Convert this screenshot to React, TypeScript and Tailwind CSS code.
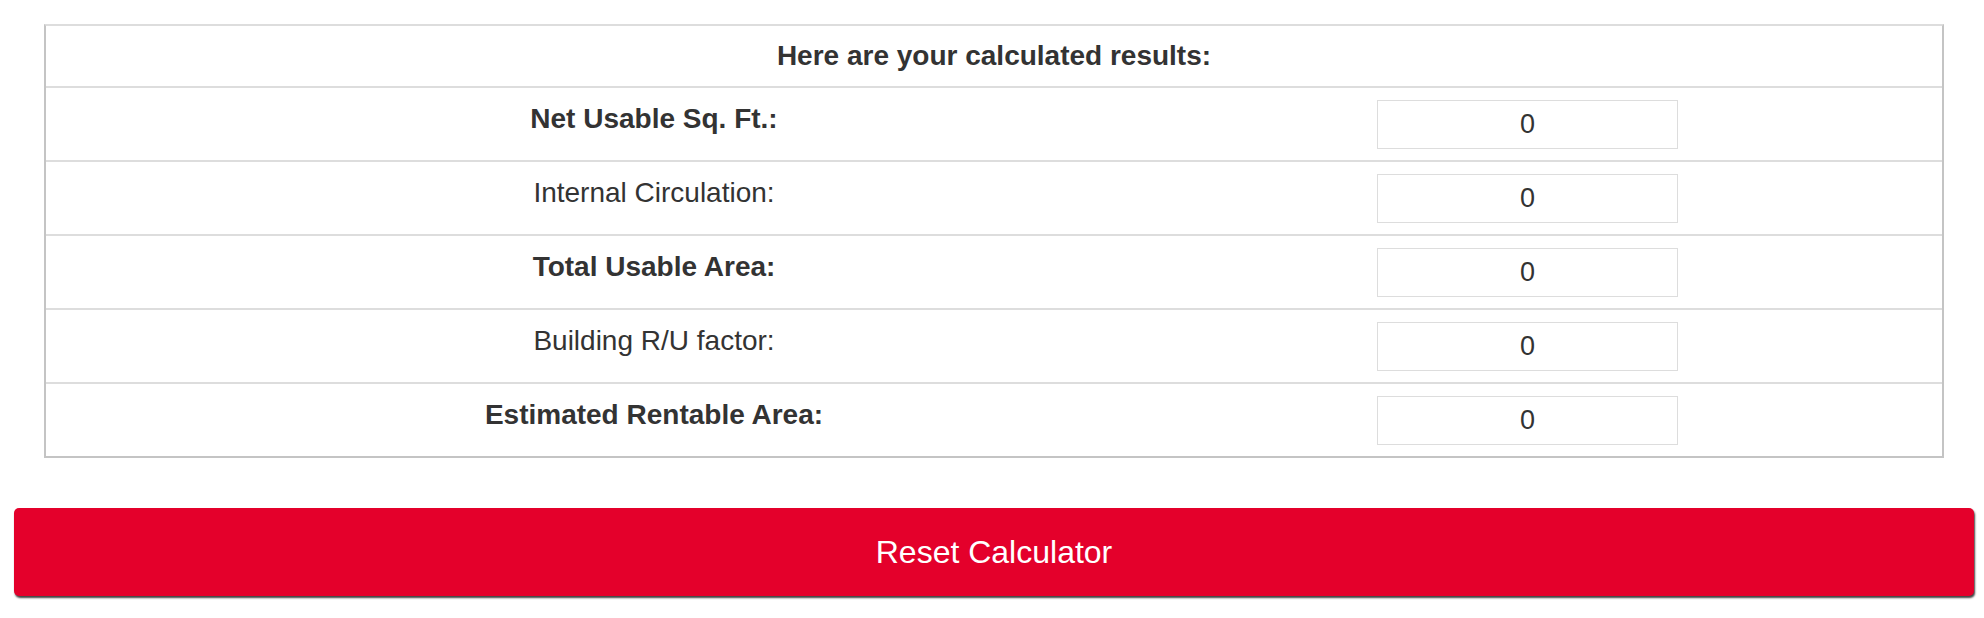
import React from "react";

const rows: { label: string; bold: boolean; value: string }[] = [
  { label: "Net Usable Sq. Ft.:", bold: true, value: "0" },
  { label: "Internal Circulation:", bold: false, value: "0" },
  { label: "Total Usable Area:", bold: true, value: "0" },
  { label: "Building R/U factor:", bold: false, value: "0" },
  { label: "Estimated Rentable Area:", bold: true, value: "0" },
];

export default function App() {
  return (
    <div
      className="w-[1984px] h-[618px] bg-white text-[#333]"
      style={{ fontFamily: '"Liberation Sans", Arial, Helvetica, sans-serif' }}
    >
      <div className="pt-[24px] pl-[44px] pr-[40px]">
        <div className="border-t-2 border-t-[#dddddd] border-x-2 border-b-2 border-x-[#c4c4c4] border-b-[#c4c4c4]">
          <div className="h-[60px] flex items-center justify-center text-[28px] font-bold leading-[32px]">
            Here are your calculated results:
          </div>
          {rows.map((r) => (
            <div
              key={r.label}
              className="border-t-2 border-[#dddddd] h-[74px] grid grid-cols-[1216px_1fr]"
            >
              <div
                className={`flex justify-center pt-[15px] text-[28px] leading-[32px] ${
                  r.bold ? "font-bold" : "font-normal"
                }`}
              >
                {r.label}
              </div>
              <div className="flex items-center pl-[115px]">
                <div className="w-[301px] h-[49px] border border-[#dddddd] flex items-center justify-center text-[27px] leading-none text-[#333]">
                  {r.value}
                </div>
              </div>
            </div>
          ))}
        </div>
      </div>
      <div className="pt-[50px] pl-[14px] pr-[10px]">
        <button className="w-full h-[88px] rounded-[5px] bg-[#e4002b] text-white text-[32px] leading-none flex items-center justify-center shadow-[1px_2px_2px_rgba(0,0,0,0.75)]">
          Reset Calculator
        </button>
      </div>
    </div>
  );
}
